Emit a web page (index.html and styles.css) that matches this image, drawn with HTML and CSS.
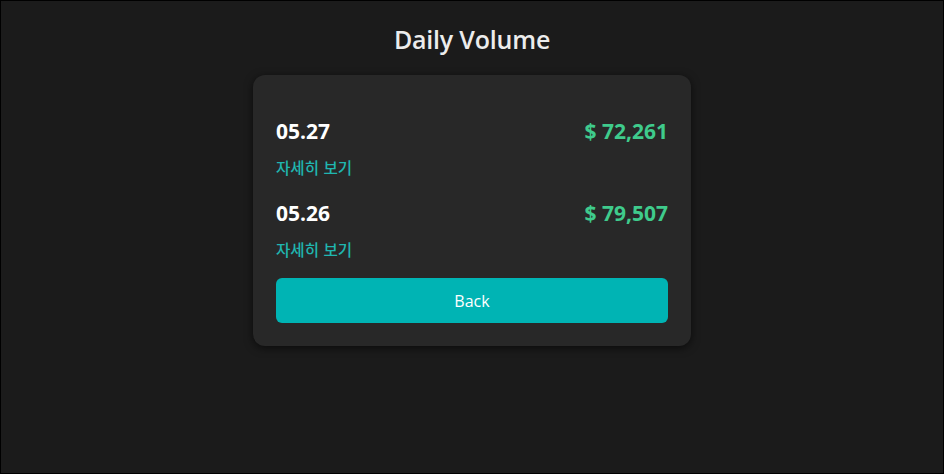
FILE: index.html
```html
<!DOCTYPE html>
<html lang="ko">
<head>
<meta charset="utf-8">
<title>Daily Volume</title>
<link rel="stylesheet" href="styles.css">
</head>
<body>
<div class="page">
  <h1 class="title">Daily Volume</h1>
  <div class="card">
    <div class="row">
      <div class="row-head">
        <span class="date">05.27</span>
        <span class="amount">$ 72,261</span>
      </div>
      <a class="detail" href="#">자세히 보기</a>
    </div>
    <div class="row">
      <div class="row-head">
        <span class="date">05.26</span>
        <span class="amount">$ 79,507</span>
      </div>
      <a class="detail" href="#">자세히 보기</a>
    </div>
    <button class="back">Back</button>
  </div>
</div>
</body>
</html>
```

FILE: styles.css
```css
* { box-sizing: border-box; }
html, body { margin: 0; padding: 0; }
body {
  background: #000;
  font-family: "Open Sans", "Noto Sans CJK KR", sans-serif;
}
.page {
  width: 944px;
  height: 474px;
  border: 1px solid #000;
  background: #1b1b1b;
  display: flex;
  flex-direction: column;
  align-items: center;
}
.title {
  margin: 21px 0 0;
  font-size: 25px;
  line-height: 34px;
  font-weight: 600;
  color: #ececec;
  letter-spacing: -0.2px;
}
.card {
  margin-top: 19px;
  width: 438px;
  background: #282828;
  border-radius: 12px;
  box-shadow: 0 2px 8px rgba(0,0,0,0.6);
  padding: 41px 23px 23px;
  display: flex;
  flex-direction: column;
}
.row {
  display: flex;
  flex-direction: column;
  margin-bottom: 21px;
}
.row:last-of-type { margin-bottom: 19px; }
.row-head {
  display: flex;
  justify-content: space-between;
  align-items: center;
  height: 30px;
}
.date {
  color: #ffffff;
  font-size: 21px;
  font-weight: 700;
}
.amount {
  color: #3fcb8c;
  font-size: 21px;
  font-weight: 700;
}
.detail {
  margin-top: 11px;
  color: #20b6b0;
  font-family: "Noto Sans CJK KR", sans-serif;
  font-size: 15.6px;
  font-weight: 500;
  line-height: 20px;
  text-decoration: none;
}
.back {
  height: 45px;
  border: none;
  border-radius: 6px;
  background: #00b4b4;
  color: #ffffff;
  font-family: "Open Sans", sans-serif;
  font-size: 16px;
}
```
